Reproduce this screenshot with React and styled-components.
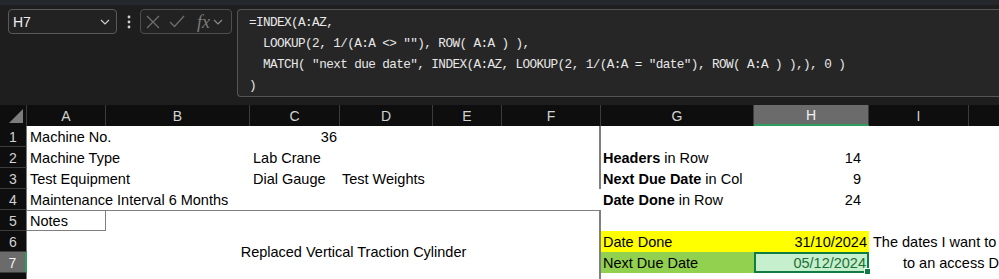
import styled, { createGlobalStyle } from "styled-components";

const Global = createGlobalStyle`
  html, body {
    margin: 0;
    padding: 0;
    background: #1e1e1e;
    overflow: hidden;
  }
  body {
    font-family: "Liberation Sans", Arial, sans-serif;
  }
`;

const Page = styled.div`
  width: 999px;
  height: 279px;
  overflow: hidden;
  background: #1e1e1e;
  display: flex;
  flex-direction: column;
`;

const FormulaBar = styled.div`
  display: flex;
  align-items: flex-start;
  flex: none;
  height: 105px;
  box-sizing: border-box;
  padding: 9px 0 0 8px;
  background: linear-gradient(#24272c 0 5px, #1e1e1e 5px);
`;

const NameBox = styled.div`
  width: 109px;
  height: 25px;
  box-sizing: border-box;
  border: 1px solid #5a5a5a;
  border-radius: 4px;
  background: #222222;
  display: flex;
  align-items: center;
  justify-content: space-between;
  padding: 0 6px 0 4px;
  color: #ececec;
  font-size: 14px;
`;

const Dots = styled.div`
  width: 23px;
  height: 25px;
  display: flex;
  align-items: center;
  justify-content: center;
`;

const FxBox = styled.div`
  width: 92px;
  height: 25px;
  box-sizing: border-box;
  border: 1px solid #4e4e4e;
  border-radius: 4px;
  background: #222222;
  display: flex;
  align-items: center;
  padding: 0 4px 0 5px;
  gap: 9px;
`;

const FxText = styled.span`
  font-family: "Liberation Serif", "Times New Roman", serif;
  font-style: italic;
  font-size: 18px;
  color: #7c7c7c;
  margin-left: 3px;
  margin-right: -6px;
  line-height: 1;
`;

const FormulaBox = styled.div`
  flex: 1;
  margin-left: 5px;
  height: 88px;
  box-sizing: border-box;
  border: 1px solid #555555;
  border-right: none;
  border-radius: 4px 0 0 4px;
  background: #262626;
  padding: 2px 0 0 11px;
  font-family: "Liberation Mono", "DejaVu Sans Mono", monospace;
  font-size: 12.7px;
  letter-spacing: -0.6px;
  line-height: 21px;
  color: #e8e8e8;
  white-space: pre;
`;

const Sheet = styled.div`
  display: grid;
  grid-template-columns: 27px 79px 144px 90px 93px 69px 99px 153px 115px 100px 80px;
  grid-auto-rows: 21px;
  width: max-content;
  background: #ffffff;
  font-size: 14.5px;
  color: #000000;
`;

const ColHead = styled.div`
  grid-row: 1;
  box-sizing: border-box;
  background: ${(p) => (p.$active ? "#6b6b6b" : "#0e0e0e")};
  color: ${(p) => (p.$active ? "#f2f2f2" : "#d2d2d2")};
  border-right: 1px solid #3c3c3c;
  border-bottom: ${(p) => (p.$active ? "2px solid #2f9b5c" : "none")};
  display: flex;
  align-items: center;
  justify-content: center;
  font-size: 14px;
`;

const Corner = styled(ColHead)`
  grid-column: 1;
  justify-content: flex-end;
  align-items: flex-end;
  padding: 0 3px 3px 0;
`;

const RowHead = styled.div`
  grid-column: 1;
  grid-row: ${(p) => p.$r};
  box-sizing: border-box;
  background: ${(p) => (p.$active ? "#6b6b6b" : "#0e0e0e")};
  color: ${(p) => (p.$active ? "#f2f2f2" : "#d2d2d2")};
  border-bottom: 1px solid #3c3c3c;
  border-right: ${(p) => (p.$active ? "2px solid #2f9b5c" : "1px solid #7a7a7a")};
  display: flex;
  align-items: center;
  justify-content: center;
  padding-top: 1px;
  font-size: 14px;
`;

const Cell = styled.div`
  grid-column: ${(p) => p.$c} / span ${(p) => p.$cs || 1};
  grid-row: ${(p) => p.$r} / span ${(p) => p.$rs || 1};
  box-sizing: border-box;
  white-space: nowrap;
  overflow: visible;
  line-height: 21px;
  padding: 1px ${(p) => p.$pr ?? 3}px 0 ${(p) => p.$pl ?? 3}px;
  text-align: ${(p) => p.$align || "left"};
  background: ${(p) => p.$bg || "transparent"};
  color: ${(p) => p.$color || "#000000"};
  border-right: ${(p) => (p.$edge ? "2px solid #808080" : "none")};
`;

const NotesCell = styled(Cell)`
  border: 1px solid #7f7f7f;
  border-left: none;
  padding-top: 0;
`;

const MergedNote = styled(Cell)`
  border-top: 1px solid #7f7f7f;
  border-right: 2px solid #808080;
  display: flex;
  align-items: center;
  justify-content: center;
  padding: 0 0 0 2px;
`;

const ActiveCell = styled(Cell)`
  position: relative;
  border: 2px solid #107c41;
  line-height: 17px;
  padding-right: 1px;
`;

const FillHandle = styled.span`
  position: absolute;
  right: -4px;
  bottom: -4px;
  width: 5px;
  height: 5px;
  background: #107c41;
  border: 1px solid #ffffff;
`;

const cols = ["A", "B", "C", "D", "E", "F", "G", "H", "I", "J"];

function Chevron({ color }) {
  return (
    <svg width="10" height="6" viewBox="0 0 10 6">
      <polyline points="1,1 5,5 9,1" fill="none" stroke={color} strokeWidth="1.2" />
    </svg>
  );
}

export default function App() {
  return (
    <Page>
      <Global />
      <FormulaBar>
        <NameBox>
          <span>H7</span>
          <Chevron color="#cfcfcf" />
        </NameBox>
        <Dots>
          <svg width="4" height="14" viewBox="0 0 4 14">
            <circle cx="2" cy="2" r="1.4" fill="#cfcfcf" />
            <circle cx="2" cy="7" r="1.4" fill="#cfcfcf" />
            <circle cx="2" cy="12" r="1.4" fill="#cfcfcf" />
          </svg>
        </Dots>
        <FxBox>
          <svg width="14" height="14" viewBox="0 0 14 14">
            <path d="M1 1 L13 13 M13 1 L1 13" stroke="#6e6e6e" strokeWidth="1.3" fill="none" />
          </svg>
          <svg width="16" height="13" viewBox="0 0 16 13">
            <polyline points="1,7 5.5,11.5 15,1" stroke="#6e6e6e" strokeWidth="1.3" fill="none" />
          </svg>
          <FxText>fx</FxText>
          <Chevron color="#8a8a8a" />
        </FxBox>
        <FormulaBox>
          {`=INDEX(A:AZ,
  LOOKUP(2, 1/(A:A <> ""), ROW( A:A ) ),
  MATCH( "next due date", INDEX(A:AZ, LOOKUP(2, 1/(A:A = "date"), ROW( A:A ) ),), 0 )
)`}
        </FormulaBox>
      </FormulaBar>

      <Sheet>
        <Corner>
          <svg width="14" height="14" viewBox="0 0 14 14">
            <polygon points="14,0 14,14 0,14" fill="#7d7d7d" />
          </svg>
        </Corner>
        {cols.map((c, i) => (
          <ColHead key={c} style={{ gridColumn: i + 2 }} $active={c === "H"}>
            {c}
          </ColHead>
        ))}
        {[1, 2, 3, 4, 5, 6, 7].map((n) => (
          <RowHead key={n} $r={n + 1} $active={n === 7}>
            {n}
          </RowHead>
        ))}
        <RowHead $r={9} />

        <Cell $c={2} $r={2}>Machine No.</Cell>
        <Cell $c={4} $r={2} $align="right">36</Cell>
        <Cell $c={7} $r={2} $edge />

        <Cell $c={2} $r={3}>Machine Type</Cell>
        <Cell $c={4} $r={3}>Lab Crane</Cell>
        <Cell $c={7} $r={3} $edge />
        <Cell $c={8} $r={3} $pl={2}>
          <b>Headers</b> in Row
        </Cell>
        <Cell $c={9} $r={3} $align="right" $pr={8}>14</Cell>

        <Cell $c={2} $r={4}>Test Equipment</Cell>
        <Cell $c={4} $r={4}>Dial Gauge</Cell>
        <Cell $c={5} $r={4} $pl={2}>Test Weights</Cell>
        <Cell $c={7} $r={4} $edge />
        <Cell $c={8} $r={4} $pl={2}>
          <b>Next Due Date</b> in Col
        </Cell>
        <Cell $c={9} $r={4} $align="right" $pr={8}>9</Cell>

        <Cell $c={2} $r={5}>Maintenance Interval 6 Months</Cell>
        <Cell $c={8} $r={5} $pl={2}>
          <b>Date Done</b> in Row
        </Cell>
        <Cell $c={9} $r={5} $align="right" $pr={8}>24</Cell>

        <NotesCell $c={2} $r={6}>Notes</NotesCell>
        <MergedNote $c={3} $cs={5} $r={6} $rs={4}>
          Replaced Vertical Traction Cylinder
        </MergedNote>

        <Cell $c={8} $r={7} $bg="#ffff00" $pl={2}>Date Done</Cell>
        <Cell $c={9} $r={7} $bg="#ffff00" $align="right" $pr={2}>31/10/2024</Cell>
        <Cell $c={10} $r={7} $pl={4}>The dates I want to move</Cell>

        <Cell $c={8} $r={8} $bg="#92d050" $pl={2}>Next Due Date</Cell>
        <ActiveCell $c={9} $r={8} $bg="#c6efce" $color="#1b6e33" $align="right">
          05/12/2024
          <FillHandle />
        </ActiveCell>
        <Cell $c={10} $r={8} $pl={34}>to an access DB</Cell>
      </Sheet>
    </Page>
  );
}
